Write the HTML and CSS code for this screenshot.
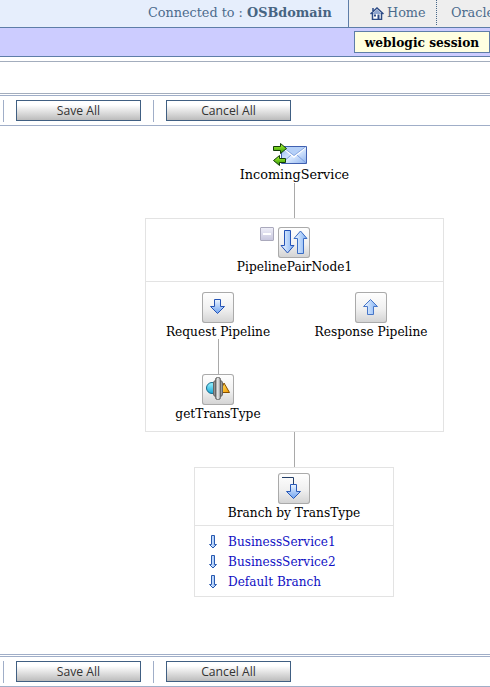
FILE: index.html
```html
<!DOCTYPE html>
<html lang="en">
<head>
<meta charset="utf-8">
<title>Message Flow</title>
<link rel="stylesheet" href="styles.css">
</head>
<body>
<svg class="defs" width="0" height="0" aria-hidden="true">
  <defs>
    <linearGradient id="blue" x1="0" y1="0" x2="0" y2="1"><stop offset="0" stop-color="#eef6ff"/><stop offset="1" stop-color="#6ea2f0"/></linearGradient>
    <linearGradient id="mail" x1="0" y1="0" x2="1" y2="1"><stop offset="0" stop-color="#8fb4ee"/><stop offset=".5" stop-color="#dcebff"/><stop offset="1" stop-color="#8db2ee"/></linearGradient>
    <linearGradient id="side" x1="0" y1="0" x2="1" y2="0"><stop offset="0" stop-color="#f4faff"/><stop offset="1" stop-color="#7eaff4"/></linearGradient>
    <linearGradient id="green" x1="0" y1="0" x2="0" y2="1"><stop offset="0" stop-color="#b4ff38"/><stop offset="1" stop-color="#289000"/></linearGradient>
    <linearGradient id="metal" x1="0" y1="0" x2="1" y2="0"><stop offset="0" stop-color="#777"/><stop offset=".45" stop-color="#eee"/><stop offset="1" stop-color="#888"/></linearGradient>
    <linearGradient id="gold" x1="0" y1="0" x2="1" y2="1"><stop offset="0" stop-color="#ffe46a"/><stop offset="1" stop-color="#f39a00"/></linearGradient>
    <linearGradient id="cyan" x1="0" y1="0" x2="0" y2="1"><stop offset="0" stop-color="#9cf4ff"/><stop offset="1" stop-color="#18a8d8"/></linearGradient>
  </defs>
</svg>
<header class="top">
  <div class="status">Connected to :&nbsp;<b>OSBdomain</b></div>
  <div class="home">
    <svg width="14" height="13" viewBox="0 0 14 13"><path d="M2.500 6v6h9V6L7 2z" fill="#fff"/><path d="M.5 7 7 1l6.500 6M3 1v4M2.500 6v6.500h9V6" fill="none" stroke="#2d4b85" stroke-width="1.500"/><path d="m3 6 4-3.500L11 6v1H3z" fill="#8fa6cf"/><path d="M4 7.500h2v2H4zM7.500 7.500h2V12h-2z" fill="#2d4b85"/></svg>
    <span>Home</span>
  </div>
  <div class="oracle">Oracle</div>
</header>
<div class="session-bar"><div class="session">weblogic session</div></div>
<div class="blank"></div>
<div class="toolbar"><button>Save All</button><button>Cancel All</button></div>
<main class="flow">
  <section class="incoming">
    <svg width="34" height="24" viewBox="0 0 34 24"><path d="M8.500 4.500h25v17h-25z" fill="url(#mail)" stroke="#4060b0"/><path d="m9 21 9-8m15 8-9-8" fill="none" stroke="#7c9fe0"/><path d="m9.500 5.500 11.500 9.500L32.500 5.500" fill="none" stroke="#fff" stroke-width="1.500"/><path d="m9.500 5 11.500 8.500L32.500 5" fill="#b5d0f8" stroke="#6c8fd6" stroke-width=".7"/><path d="M.5 4.500h7v-3l6 5-6 5v-3h-7z" fill="url(#green)" stroke="#123d08"/><path d="M12.500 16.500h-6v-3l-6 5 6 5v-3h6z" fill="url(#green)" stroke="#123d08"/></svg>
    <span class="label">IncomingService</span>
  </section>
  <i class="line"></i>
  <section class="pair">
    <div class="pair-head">
      <div class="icons">
        <span class="minus"></span>
        <svg class="tile" width="32" height="31" viewBox="0 0 32 31"><path d="M6.500 3.500h6v15h3.500l-6.500 7.500L3 18.500h3.500z" fill="url(#side)" stroke="#2453b8"/><path d="M19.500 26.500v-15h-3.500l6.500-7.500 6.500 7.500h-3.500v15z" fill="url(#side)" stroke="#3a6cc4"/></svg>
      </div>
      <span class="label">PipelinePairNode1</span>
    </div>
    <div class="pair-body">
      <div class="col request">
        <svg class="tile" width="32" height="31" viewBox="0 0 32 31"><path d="M12.500 7.500h6v7h4l-7 7-7-7h4z" fill="url(#blue)" stroke="#2453b5"/></svg>
        <span class="label">Request Pipeline</span>
        <i class="line"></i>
        <svg class="tile" width="32" height="31" viewBox="0 0 32 31"><circle cx="10" cy="14" r="5.500" fill="url(#cyan)" stroke="#136a8c"/><path d="m22 9 5.500 9.500H18z" fill="url(#gold)" stroke="#875000"/><rect x="11.500" y="6.500" width="9" height="16" rx="2.500" fill="url(#metal)" stroke="#666"/><rect x="13.500" y="3.500" width="5" height="22" rx="2" fill="url(#metal)" stroke="#666"/></svg>
        <span class="label">getTransType</span>
      </div>
      <div class="col response">
        <svg class="tile" width="32" height="31" viewBox="0 0 32 31"><path d="M12.500 22.500v-8h-4l7-7 7 7h-4v8z" fill="url(#side)" stroke="#4776c8"/></svg>
        <span class="label">Response Pipeline</span>
      </div>
    </div>
  </section>
  <i class="line"></i>
  <section class="branch">
    <div class="branch-head">
      <svg class="tile" width="32" height="31" viewBox="0 0 32 31"><path d="M4 4.500h11.500V11" fill="none" stroke="#243f68"/><path d="M12.500 11.500h6v7h4l-7 7-7-7h4z" fill="url(#blue)" stroke="#2859b8"/></svg>
      <span class="label">Branch by TransType</span>
    </div>
    <ul>
      <li><svg width="8" height="14" viewBox="0 0 8 14"><path d="M2.500.5h3v9h2L4 13 .5 9.500h2z" fill="url(#side)" stroke="#2859b0"/></svg><a>BusinessService1</a></li>
      <li><svg width="8" height="14" viewBox="0 0 8 14"><path d="M2.500.5h3v9h2L4 13 .5 9.500h2z" fill="url(#side)" stroke="#2859b0"/></svg><a>BusinessService2</a></li>
      <li><svg width="8" height="14" viewBox="0 0 8 14"><path d="M2.500.5h3v9h2L4 13 .5 9.500h2z" fill="url(#side)" stroke="#2859b0"/></svg><a>Default Branch</a></li>
    </ul>
  </section>
</main>
<div class="toolbar bottom"><button>Save All</button><button>Cancel All</button></div>
</body>
</html>
```
FILE: styles.css
```css
* { box-sizing: border-box; }
body { margin: 0; width: 490px; height: 687px; overflow: hidden; background: #fff; font: 12.2px/16px "DejaVu Serif", serif; color: #000; }
svg { display: block; flex: none; }
.defs { position: absolute; }
.top { display: flex; height: 28px; border-bottom: 1px solid #5e7da8; background: #eee; font-size: 12.8px; line-height: 25px; color: #4c6b8c; white-space: nowrap; overflow: hidden; }
.status { flex: none; width: 349px; padding-left: 148px; background: #e6eefc; border-right: 1px solid #5e7da8; }
.status b { color: #466482; }
.home { flex: none; display: flex; width: 88px; padding-left: 21px; gap: 3px; border-right: 1px dotted #46678a; height: 25px; }
.home svg { margin-top: 7px; }
.oracle { padding-left: 14px; }
.session-bar { display: flex; justify-content: flex-end; height: 29px; padding-top: 3px; background: #ccf; border-bottom: 1px solid #5e7da8; }
.session { width: 136px; height: 22px; border: 1px solid #5e7da8; background: #ffffe1; font-weight: bold; line-height: 22px; text-align: center; white-space: nowrap; }
.blank { height: 33px; margin-top: 4px; border: 1px solid #a3adbd; border-width: 1px 0; }
.toolbar { display: flex; height: 31px; margin-top: 1px; padding: 4px 0 4px 3px; border: 1px solid #a0aec8; border-width: 1px 0; background: linear-gradient(#a0aec8, #a0aec8) 153px 4px / 1px 22px no-repeat; }
.toolbar::before { content: ""; height: 22px; border-left: 1px solid #a0aec8; }
.toolbar button { width: 125px; height: 21px; margin: 0 13px 0 12px; padding: 0; border: 1px solid #405f82; background: linear-gradient(#fff 20%, #bcbcbc); color: #333; font: 12.2px/18px "Open Sans", sans-serif; }
.flow { display: flex; flex-direction: column; align-items: center; height: 529px; padding: 17px 0 0 99px; border-bottom: 1px solid #a0aec8; }
.incoming { display: flex; flex-direction: column; align-items: center; height: 40px; font-size: 12.8px; }
.incoming svg { margin: -1px 0 1px -8px; }
.label { white-space: nowrap; line-height: 16px; }
.tile + .label, .icons + .label { height: 16px; line-height: 18px; }
.line { flex: none; width: 1px; height: 35px; background: #a9a9a9; }
.pair { width: 299px; height: 214px; border: 1px solid #e3e3e3; }
.pair-head { height: 63px; padding-top: 8px; border-bottom: 1px solid #e3e3e3; display: flex; flex-direction: column; align-items: center; }
.icons { display: flex; gap: 4px; margin-left: -19px; }
.minus { width: 14px; height: 14px; border: 1px solid #aaa9bc; border-radius: 1px; background: linear-gradient(#fff, #fff) center / 8px 2px no-repeat, linear-gradient(#eeeef8, #c9c8df); }
.tile { box-shadow: inset 0 0 0 1px #aaa; border-radius: 3px; background: linear-gradient(#fff, #f0f0f0 55%, #d2d2d2); }
.pair-body { display: flex; padding-top: 10px; }
.col { flex: none; display: flex; flex-direction: column; align-items: center; }
.request { width: 144px; }
.response { width: 162px; }
.branch { width: 200px; height: 130px; margin-right: 1px; border: 1px solid #e3e3e3; }
.branch-head { height: 58px; padding-top: 5px; border-bottom: 1px solid #e3e3e3; display: flex; flex-direction: column; align-items: center; }
.branch ul { list-style: none; margin: 6px 0 0; padding: 0 0 0 14px; font-size: 12.1px; }
.branch li { display: flex; align-items: center; gap: 11px; height: 20px; color: #1111c4; }
```
